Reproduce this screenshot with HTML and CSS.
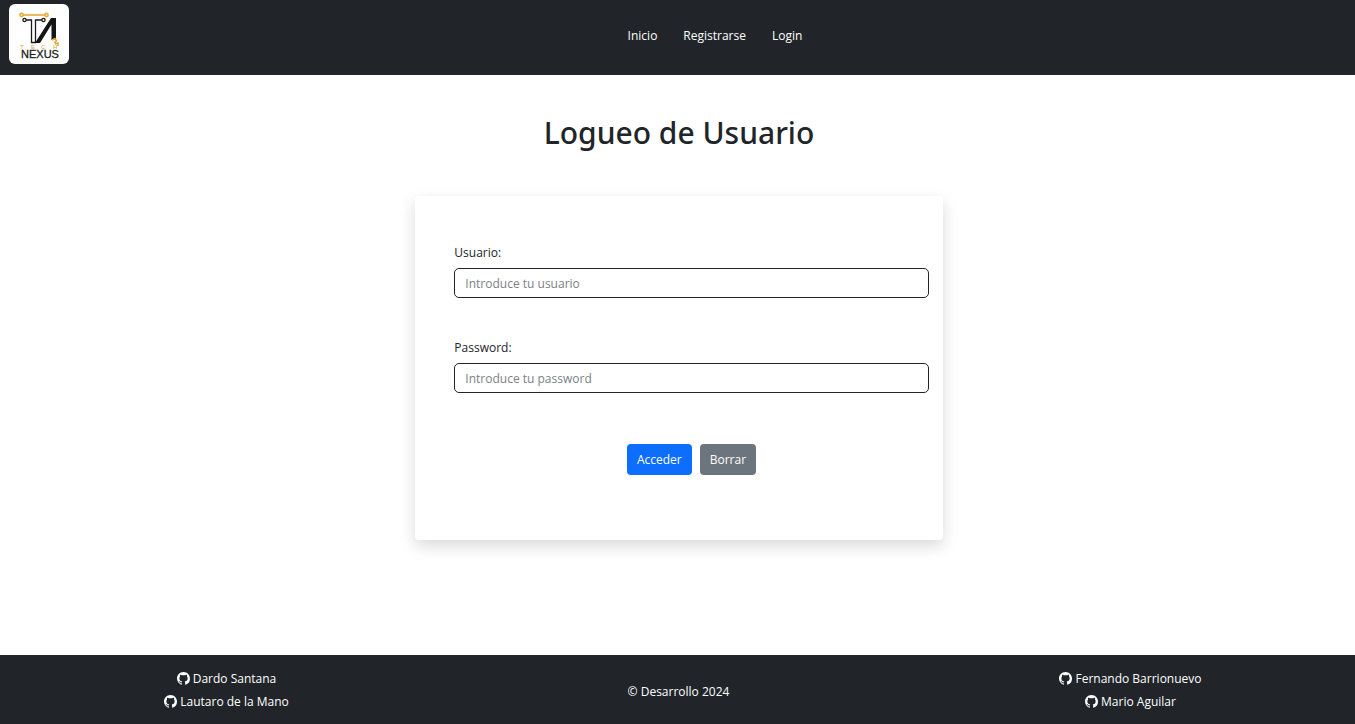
FILE: index.html
```html
<!DOCTYPE html>
<html lang="es">
<head>
<meta charset="utf-8">
<meta name="viewport" content="width=device-width, initial-scale=1">
<title>Tech Nexus - Login</title>
<link rel="stylesheet" href="styles.css">
</head>
<body>
<svg class="sprite" aria-hidden="true">
  <symbol id="github" viewBox="0 0 16 16">
    <path d="M8 0C3.58 0 0 3.58 0 8c0 3.54 2.29 6.53 5.47 7.59.4.07.55-.17.55-.38 0-.19-.01-.82-.01-1.49-2.01.37-2.53-.49-2.69-.94-.09-.23-.48-.94-.82-1.13-.28-.15-.68-.52-.01-.53.63-.01 1.08.58 1.23.82.72 1.21 1.87.87 2.33.66.07-.52.28-.87.51-1.07-1.78-.2-3.64-.89-3.64-3.95 0-.87.31-1.59.82-2.15-.08-.2-.36-1.02.08-2.12 0 0 .67-.21 2.2.82.64-.18 1.32-.27 2-.27s1.36.09 2 .27c1.53-1.04 2.2-.82 2.2-.82.44 1.1.16 1.92.08 2.12.51.56.82 1.27.82 2.15 0 3.07-1.87 3.75-3.65 3.95.29.25.54.73.54 1.48 0 1.07-.01 1.93-.01 2.2 0 .21.15.46.55.38A8.01 8.01 0 0 0 16 8c0-4.42-3.58-8-8-8z"/>
  </symbol>
</svg>
<header class="topbar">
  <a class="logo" href="#" aria-label="Tech Nexus">
    <svg class="logo-image" viewBox="0 0 60 60" aria-hidden="true">
      <g fill="none" stroke="#e8ab38" stroke-width="1.600">
        <circle cx="12.500" cy="11" r="1.600"/>
        <circle cx="37.500" cy="11" r="1.600"/>
        <path d="M14 11h22"/>
      </g>
      <g fill="none" stroke="#1b1b1b" stroke-width="1.3">
        <circle cx="15.500" cy="16" r="1.600"/>
        <circle cx="34.500" cy="16" r="1.600"/>
        <path d="M17 16h5.500v22.500h4V16h6.500"/>
      </g>
      <path fill="#151515" d="M26 39 42 14h5v22h-4.500V20.500L31 39z"/>
      <path fill="none" stroke="#e8a02c" stroke-width="1.400" d="M43 36l3-1.500 1.500 2-2 2.500M46 40l3-1v3"/>
      <text class="logo-tech" x="11" y="45">T</text>
      <text class="logo-tech" x="22" y="45">E</text>
      <text class="logo-tech" x="32" y="45">C</text>
      <text class="logo-tech" x="44" y="45">H</text>
      <text class="logo-nexus" x="31" y="54">NEXUS</text>
    </svg>
  </a>
  <nav class="menu">
    <a href="#">Inicio</a>
    <a href="#">Registrarse</a>
    <a href="#">Login</a>
  </nav>
</header>
<main class="content">
  <h1 class="title">Logueo de Usuario</h1>
  <form class="card">
    <div class="field">
      <label for="usuario">Usuario:</label>
      <input id="usuario" type="text" placeholder="Introduce tu usuario">
    </div>
    <div class="field">
      <label for="password">Password:</label>
      <input id="password" type="password" placeholder="Introduce tu password">
    </div>
    <div class="actions">
      <button class="button primary" type="submit">Acceder</button>
      <button class="button secondary" type="reset">Borrar</button>
    </div>
  </form>
</main>
<footer class="footer">
  <div class="authors">
    <a href="#"><svg class="icon" aria-hidden="true"><use href="#github"/></svg>Dardo Santana</a>
    <a href="#"><svg class="icon" aria-hidden="true"><use href="#github"/></svg>Lautaro de la Mano</a>
  </div>
  <p class="copyright">© Desarrollo 2024</p>
  <div class="authors">
    <a href="#"><svg class="icon" aria-hidden="true"><use href="#github"/></svg>Fernando Barrionuevo</a>
    <a href="#"><svg class="icon" aria-hidden="true"><use href="#github"/></svg>Mario Aguilar</a>
  </div>
</footer>
</body>
</html>
```
FILE: styles.css
```css
* { box-sizing: border-box; }

body {
  display: flex;
  flex-direction: column;
  min-height: 100vh;
  margin: 0;
  background: #fff;
  color: #212529;
  font: 12px/20px "Segoe UI", "Open Sans", "Noto Sans", sans-serif;
}

a { color: #fff; text-decoration: none; }

.sprite { position: absolute; width: 0; height: 0; }

.topbar {
  display: flex;
  align-items: flex-start;
  padding: 4px 0 11px 9px;
  background: #212529;
}

.logo {
  display: block;
  width: 60px;
  height: 60px;
  border-radius: 6px;
  background: #fff;
}

.logo-image { display: block; width: 100%; height: 100%; }

.logo-tech { fill: #dba829; font: 6px/1 "Liberation Sans", sans-serif; }

.logo-nexus {
  fill: #1b1b1b;
  stroke: #1b1b1b;
  stroke-width: 0.3px;
  font: 11px/1 "Liberation Sans", sans-serif;
  text-anchor: middle;
}

.menu {
  display: flex;
  flex: 1;
  justify-content: center;
  gap: 26px;
  padding: 22px 0 0 6px;
}

.content {
  display: flex;
  flex: 1;
  flex-direction: column;
  align-items: center;
  padding: 38px 0 40px 3px;
}

.title {
  margin: 0;
  font-family: "Segoe UI", "Noto Sans", sans-serif;
  font-size: 30px;
  font-weight: 500;
  line-height: 40px;
}

.card {
  width: 39%;
  min-width: 320px;
  margin-top: 43px;
  padding: 47px 14px 65px 39px;
  border-radius: 4px;
  background: #fff;
  box-shadow: 0 6px 16px rgba(0, 0, 0, 0.15);
}

.field { margin-bottom: 40px; }

.field label { display: block; margin-bottom: 5px; }

.field input {
  display: block;
  width: 100%;
  height: 30px;
  padding: 0 10px;
  border: 1px solid #212529;
  border-radius: 5px;
  background: #fff;
  color: #212529;
  font: inherit;
}

.field input::placeholder { color: #7b8186; opacity: 1; }

.actions { display: flex; justify-content: center; gap: 8px; padding-top: 11px; }

.button {
  height: 31px;
  padding: 1px 10px 0;
  border: 0;
  border-radius: 4px;
  color: #fff;
  font: inherit;
}

.primary { background: #0d6efd; }

.secondary { background: #6c757d; }

.footer {
  display: grid;
  grid-template-columns: repeat(3, 1fr);
  column-gap: 3px;
  align-items: center;
  padding: 12px 0 11px 2px;
  background: #212529;
  color: #fff;
  text-align: center;
}

.authors { display: flex; flex-direction: column; align-items: center; line-height: 23px; }

.authors a { display: flex; align-items: center; gap: 3px; }

.icon { width: 13px; height: 13px; fill: #fff; }

.copyright { margin: 0; padding-top: 4px; }
```
